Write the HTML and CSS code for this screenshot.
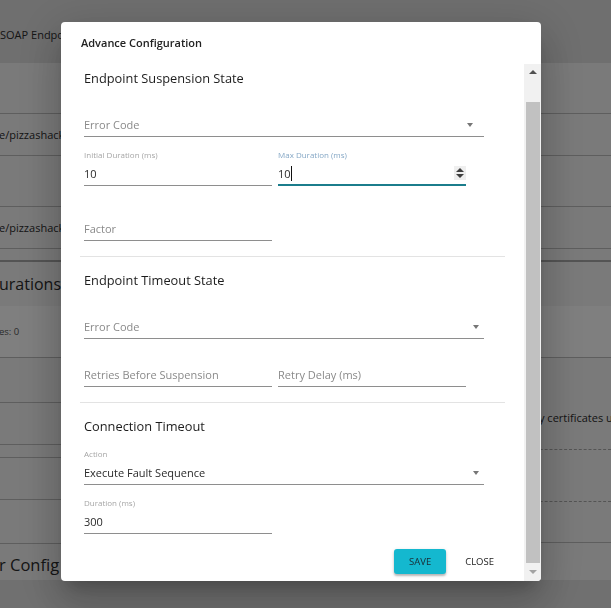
FILE: index.html
```html
<!DOCTYPE html>
<html>
<head>
<meta charset="utf-8">
<link rel="stylesheet" href="styles.css">
</head>
<body>
<div class="page">
  <div class="row r-top"><span class="bgtxt">SOAP Endpo</span></div>
  <div class="row r-a"></div>
  <div class="row r-b"><span class="bgtxt cut">e/pizzashack</span></div>
  <div class="row r-c"></div>
  <div class="row r-b"><span class="bgtxt cut">e/pizzashack</span></div>
  <div class="row r-e"></div>
  <div class="row r-f"><span class="bghead cut">urations</span></div>
  <div class="row r-g"><span class="bgsmall cut">es: 0</span></div>
  <div class="cols">
    <div class="col-left">
      <div class="row l1"></div>
      <div class="row l2"></div>
      <div class="row l3"></div>
      <div class="row l2"></div>
      <div class="row l5"></div>
      <div class="row l6"><span class="bghead cut">r Config</span></div>
    </div>
    <div class="col-right">
      <div class="row rr1"><span class="bgtxt">y certificates u</span></div>
      <div class="row rr2"></div>
      <div class="row rr3"></div>
    </div>
  </div>
  <div class="foot"></div>
</div>

<div class="overlay">
  <div class="dialog">
    <div class="dlg-title">Advance Configuration</div>
    <div class="dlg-body">
      <div class="dlg-content">
        <section class="sec sec-first">
          <h3 class="sec-head">Endpoint Suspension State</h3>
          <div class="field full">
            <div class="lbl"></div>
            <div class="ctl"><span class="ph">Error Code</span><span class="arrow arrow-a"></span></div>
          </div>
          <div class="fieldrow gap14">
            <div class="field half">
              <div class="lbl">Initial Duration (ms)</div>
              <div class="ctl"><span class="val">10</span></div>
            </div>
            <div class="field half focus">
              <div class="lbl lbl-focus">Max Duration (ms)</div>
              <div class="ctl"><span class="val">10</span><span class="caret"></span><span class="grow"></span><span class="spin"><span class="spin-up"></span><span class="spin-down"></span></span></div>
            </div>
          </div>
          <div class="field half gap20">
            <div class="lbl"></div>
            <div class="ctl"><span class="ph">Factor</span></div>
          </div>
        </section>

        <section class="sec">
          <h3 class="sec-head">Endpoint Timeout State</h3>
          <div class="field full">
            <div class="lbl"></div>
            <div class="ctl"><span class="ph">Error Code</span><span class="arrow arrow-b"></span></div>
          </div>
          <div class="fieldrow gap13">
            <div class="field half">
              <div class="lbl"></div>
              <div class="ctl"><span class="ph">Retries Before Suspension</span></div>
            </div>
            <div class="field half">
              <div class="lbl"></div>
              <div class="ctl"><span class="ph">Retry Delay (ms)</span></div>
            </div>
          </div>
        </section>

        <section class="sec sec-last">
          <h3 class="sec-head">Connection Timeout</h3>
          <div class="field full">
            <div class="lbl">Action</div>
            <div class="ctl"><span class="val grow">Execute Fault Sequence</span><span class="arrow arrow-b"></span></div>
          </div>
          <div class="field half gap14">
            <div class="lbl">Duration (ms)</div>
            <div class="ctl"><span class="val">300</span></div>
          </div>
        </section>

        <div class="actions">
          <button class="btn btn-save">SAVE</button>
          <button class="btn btn-close">CLOSE</button>
        </div>
      </div>
      <div class="scrollbar">
        <div class="sb-btn"><span class="sb-up"></span></div>
        <div class="sb-thumb"></div>
        <div class="sb-btn"><span class="sb-down"></span></div>
      </div>
    </div>
  </div>
</div>
</body>
</html>
```

FILE: styles.css
```css
* { box-sizing: border-box; }
html, body { margin: 0; padding: 0; }
body {
  width: 611px;
  height: 608px;
  overflow: hidden;
  font-family: "Open Sans", "Liberation Sans", sans-serif;
}

/* ---------- background page ---------- */
.page {
  width: 611px;
  height: 608px;
  background: #f5f5f5;
  color: #2b2b2b;
  display: flex;
  flex-direction: column;
}
.row {
  display: flex;
  align-items: center;
  border-bottom: 1px solid #bdbdbd;
  white-space: nowrap;
  overflow: hidden;
}
.r-top { height: 63px; background: #dedede; border-bottom: none; align-items: flex-start; padding-top: 27px; }
.r-a { height: 51px; }
.r-b { height: 42px; }
.r-c { height: 51px; }
.r-e { height: 13px; border-bottom: 2px solid #a9a9a9; }
.r-f { height: 44px; border-bottom: none; }
.r-g { height: 52px; background: #ffffff; }

.bgtxt { font-size: 11px; line-height: 16px; }
.bghead { font-size: 16px; line-height: 22px; }
.bgsmall { font-size: 9.5px; line-height: 14px; color: #555; }
.cut { margin-left: -1px; }

.cols { display: flex; }
.col-left { width: 530px; flex: none; display: flex; flex-direction: column; }
.col-right { flex: 1; min-width: 0; display: flex; flex-direction: column; }
.l1 { height: 45px; }
.l2 { height: 42px; }
.l3 { height: 13px; }
.l5 { height: 44px; }
.l6 { height: 36px; border-bottom: none; align-items: flex-start; padding-top: 10px; }
.l6 .bghead { font-size: 16.5px; }
.rr1 { height: 92px; border-bottom: 1px dashed #a8a8a8; align-items: flex-end; padding-bottom: 23px; padding-left: 9px; }
.rr2 { height: 52px; border-bottom: 1px dashed #a8a8a8; }
.rr3 { height: 41px; }
.foot { flex: 1; background: #e0e0e0; }
.col-left, .col-right { height: 222px; }

/* ---------- overlay & dialog ---------- */
.overlay {
  position: fixed;
  inset: 0;
  background: rgba(0, 0, 0, 0.5);
  padding: 22px 0 0 61px;
}
.dialog {
  width: 480px;
  height: 559px;
  background: #fff;
  border-radius: 4px;
  overflow: hidden;
  display: flex;
  flex-direction: column;
  box-shadow: 0 11px 15px -7px rgba(0,0,0,.2), 0 24px 38px 3px rgba(0,0,0,.14), 0 9px 46px 8px rgba(0,0,0,.12);
}
.dlg-title {
  height: 42px;
  flex: none;
  padding: 13px 0 0 20px;
  font-size: 11px;
  font-weight: 600;
  line-height: 16px;
  color: #222;
}
.dlg-body {
  flex: 1;
  display: flex;
  min-height: 0;
}
.dlg-content {
  flex: 1;
  padding: 0 19px;
  display: flex;
  flex-direction: column;
}
.sec {
  padding: 13px 0 15px 0;
  border-bottom: 1px solid #e3e3e3;
  display: flex;
  flex-direction: column;
}
.sec-first { padding-top: 4px; }
.sec-last { border-bottom: none; }
.sec-head {
  margin: 0 0 14px 4px;
  font-size: 12.8px;
  font-weight: 400;
  line-height: 20px;
  color: #1c1c1c;
}

.fieldrow { display: flex; gap: 6px; margin-left: 4px; }
.fieldrow .field { margin-left: 0; }
.field { margin-left: 4px; display: flex; flex-direction: column; }
.full { width: 400px; }
.half { width: 188px; }
.gap14 { margin-top: 14px; }
.gap13 { margin-top: 13px; }
.gap20 { margin-top: 20px; }

.lbl {
  height: 12px;
  font-size: 8px;
  line-height: 8px;
  color: #a6a6a6;
  white-space: nowrap;
}
.lbl-focus { color: #86a8c6; }
.ctl {
  height: 23px;
  display: flex;
  align-items: center;
  border-bottom: 1px solid #8e8e8e;
  font-size: 11px;
  line-height: 22px;
  white-space: nowrap;
}
.focus .ctl { border-bottom: 2px solid #1b7d8c; }
.ph { color: #8a8a8a; flex: 1; }
.val { color: #2a2a2a; }
.grow { flex: 1; }
.caret {
  display: inline-block;
  width: 1px;
  height: 15px;
  background: #111;
}
.arrow {
  width: 0;
  height: 0;
  border-left: 3.5px solid transparent;
  border-right: 3.5px solid transparent;
  border-top: 4px solid #767676;
}
.arrow-a { margin-right: 11px; margin-top: -1px; }
.arrow-b { margin-right: 5px; margin-top: -1px; }
.spin {
  width: 12px;
  height: 14px;
  background: #efefef;
  display: flex;
  flex-direction: column;
  align-items: center;
  justify-content: center;
  gap: 2px;
  margin-top: -1px;
}
.spin-up {
  width: 0; height: 0;
  border-left: 4px solid transparent;
  border-right: 4px solid transparent;
  border-bottom: 4px solid #3f3f3f;
}
.spin-down {
  width: 0; height: 0;
  border-left: 4px solid transparent;
  border-right: 4px solid transparent;
  border-top: 4px solid #3f3f3f;
}

.actions {
  display: flex;
  justify-content: flex-end;
  padding-right: 3px;
}
.btn {
  font-family: "Open Sans", "Liberation Sans", sans-serif;
  font-size: 9.5px;
  line-height: 25px;
  height: 25px;
  border: none;
  border-radius: 3px;
  cursor: pointer;
}
.btn-save {
  width: 52px;
  padding: 0;
  background: #14b8cf;
  color: #1b2a33;
  box-shadow: 0 2px 2px rgba(0,0,0,.22), 0 1px 4px rgba(0,0,0,.12);
}
.btn-close {
  margin-left: 11px;
  padding: 0 8px;
  background: transparent;
  color: #222;
}

/* ---------- fake scrollbar ---------- */
.scrollbar {
  width: 17px;
  flex: none;
  background: #f1f1f1;
  display: flex;
  flex-direction: column;
  padding-bottom: 1px;
}
.sb-btn {
  height: 17px;
  flex: none;
  display: flex;
  align-items: center;
  justify-content: center;
}
.sb-up {
  width: 0; height: 0;
  border-left: 4px solid transparent;
  border-right: 4px solid transparent;
  border-bottom: 4px solid #505050;
  margin-top: -1px;
}
.sb-down {
  width: 0; height: 0;
  border-left: 4px solid transparent;
  border-right: 4px solid transparent;
  border-top: 4px solid #a3a3a3;
}
.sb-thumb {
  flex: 1;
  margin: 21px 1px 0 2px;
  background: #c1c1c1;
}
```
